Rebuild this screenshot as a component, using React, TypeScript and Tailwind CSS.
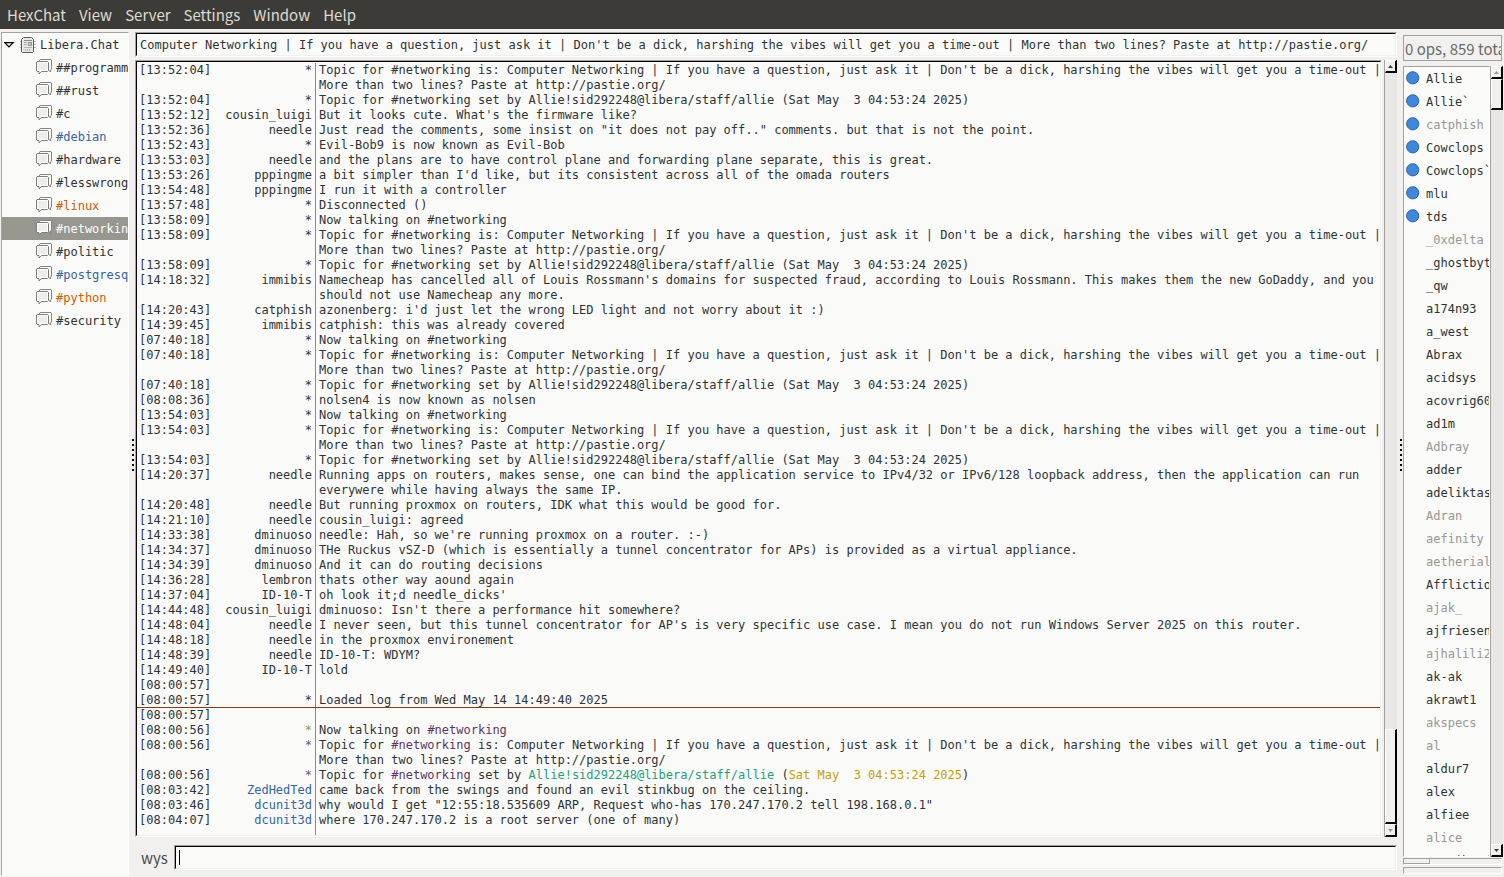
import type { ReactNode } from "react";
import clsx from "clsx";

interface Channel {
  name: string;
  tone?: "message" | "highlight";
  selected?: boolean;
}

interface User {
  name: string;
  voiced?: boolean;
  away?: boolean;
}

interface Line {
  time: string;
  nick?: string;
  nickClass?: string;
  text?: ReactNode;
  marker?: boolean;
}

const TOPIC =
  "Computer Networking | If you have a question, just ask it | Don't be a dick, harshing the vibes will get you a time-out | More than two lines? Paste at http://pastie.org/";
const TOPIC_IS = `Topic for #networking is: ${TOPIC}`;
const TOPIC_SET =
  "Topic for #networking set by Allie!sid292248@libera/staff/allie (Sat May  3 04:53:24 2025)";

const menus = ["HexChat", "View", "Server", "Settings", "Window", "Help"];

const channels: Channel[] = [
  { name: "##programming" },
  { name: "##rust" },
  { name: "#c" },
  { name: "#debian", tone: "message" },
  { name: "#hardware" },
  { name: "#lesswrong" },
  { name: "#linux", tone: "highlight" },
  { name: "#networking", selected: true },
  { name: "#politic" },
  { name: "#postgresql", tone: "message" },
  { name: "#python", tone: "highlight" },
  { name: "#security" },
];

const users: User[] = [
  { name: "Allie", voiced: true },
  { name: "Allie`", voiced: true },
  { name: "catphish", voiced: true, away: true },
  { name: "Cowclops", voiced: true },
  { name: "Cowclops`", voiced: true },
  { name: "mlu", voiced: true },
  { name: "tds", voiced: true },
  { name: "_0xdelta", away: true },
  { name: "_ghostbyt" },
  { name: "_qw" },
  { name: "a174n93" },
  { name: "a_west" },
  { name: "Abrax" },
  { name: "acidsys" },
  { name: "acovrig60" },
  { name: "ad1m" },
  { name: "Adbray", away: true },
  { name: "adder" },
  { name: "adeliktas" },
  { name: "Adran", away: true },
  { name: "aefinity", away: true },
  { name: "aetherial", away: true },
  { name: "Afflictio" },
  { name: "ajak_", away: true },
  { name: "ajfriesen" },
  { name: "ajhalili2", away: true },
  { name: "ak-ak" },
  { name: "akrawt1" },
  { name: "akspecs", away: true },
  { name: "al", away: true },
  { name: "aldur7" },
  { name: "alex" },
  { name: "alfiee" },
  { name: "alice", away: true },
  { name: "amoribund" },
];

const lines: Line[] = [
  { time: "13:52:04", nick: "*", text: TOPIC_IS },
  { time: "13:52:04", nick: "*", text: TOPIC_SET },
  { time: "13:52:12", nick: "cousin_luigi", text: "But it looks cute. What's the firmware like?" },
  { time: "13:52:36", nick: "needle", text: 'Just read the comments, some insist on "it does not pay off.." comments. but that is not the point.' },
  { time: "13:52:43", nick: "*", text: "Evil-Bob9 is now known as Evil-Bob" },
  { time: "13:53:03", nick: "needle", text: "and the plans are to have control plane and forwarding plane separate, this is great." },
  { time: "13:53:26", nick: "pppingme", text: "a bit simpler than I'd like, but its consistent across all of the omada routers" },
  { time: "13:54:48", nick: "pppingme", text: "I run it with a controller" },
  { time: "13:57:48", nick: "*", text: "Disconnected ()" },
  { time: "13:58:09", nick: "*", text: "Now talking on #networking" },
  { time: "13:58:09", nick: "*", text: TOPIC_IS },
  { time: "13:58:09", nick: "*", text: TOPIC_SET },
  { time: "14:18:32", nick: "immibis", text: "Namecheap has cancelled all of Louis Rossmann's domains for suspected fraud, according to Louis Rossmann. This makes them the new GoDaddy, and you should not use Namecheap any more." },
  { time: "14:20:43", nick: "catphish", text: "azonenberg: i'd just let the wrong LED light and not worry about it :)" },
  { time: "14:39:45", nick: "immibis", text: "catphish: this was already covered" },
  { time: "07:40:18", nick: "*", text: "Now talking on #networking" },
  { time: "07:40:18", nick: "*", text: TOPIC_IS },
  { time: "07:40:18", nick: "*", text: TOPIC_SET },
  { time: "08:08:36", nick: "*", text: "nolsen4 is now known as nolsen" },
  { time: "13:54:03", nick: "*", text: "Now talking on #networking" },
  { time: "13:54:03", nick: "*", text: TOPIC_IS },
  { time: "13:54:03", nick: "*", text: TOPIC_SET },
  { time: "14:20:37", nick: "needle", text: "Running apps on routers, makes sense, one can bind the application service to IPv4/32 or IPv6/128 loopback address, then the application can run everywere while having always the same IP." },
  { time: "14:20:48", nick: "needle", text: "But running proxmox on routers, IDK what this would be good for." },
  { time: "14:21:10", nick: "needle", text: "cousin_luigi: agreed" },
  { time: "14:33:38", nick: "dminuoso", text: "needle: Hah, so we're running proxmox on a router. :-)" },
  { time: "14:34:37", nick: "dminuoso", text: "THe Ruckus vSZ-D (which is essentially a tunnel concentrator for APs) is provided as a virtual appliance." },
  { time: "14:34:39", nick: "dminuoso", text: "And it can do routing decisions" },
  { time: "14:36:28", nick: "lembron", text: "thats other way aound again" },
  { time: "14:37:04", nick: "ID-10-T", text: "oh look it;d needle_dicks'" },
  { time: "14:44:48", nick: "cousin_luigi", text: "dminuoso: Isn't there a performance hit somewhere?" },
  { time: "14:48:04", nick: "needle", text: "I never seen, but this tunnel concentrator for AP's is very specific use case. I mean you do not run Windows Server 2025 on this router." },
  { time: "14:48:18", nick: "needle", text: "in the proxmox environement" },
  { time: "14:48:39", nick: "needle", text: "ID-10-T: WDYM?" },
  { time: "14:49:40", nick: "ID-10-T", text: "lold" },
  { time: "08:00:57" },
  { time: "08:00:57", nick: "*", text: "Loaded log from Wed May 14 14:49:40 2025" },
  { time: "08:00:57", marker: true },
  {
    time: "08:00:56",
    nick: "*",
    nickClass: "text-[#7da81e]",
    text: (
      <>
        Now talking on <span className="text-[#5c3566]">#networking</span>
      </>
    ),
  },
  {
    time: "08:00:56",
    nick: "*",
    nickClass: "text-[#75507b]",
    text: (
      <>
        Topic for <span className="text-[#5c3566]">#networking</span> is: {TOPIC}
      </>
    ),
  },
  {
    time: "08:00:56",
    nick: "*",
    nickClass: "text-[#75507b]",
    text: (
      <>
        Topic for <span className="text-[#5c3566]">#networking</span> set by{" "}
        <span className="text-[#1aa17a]">Allie!sid292248@libera/staff/allie</span> (
        <span className="text-[#c4a000]">Sat May{"  "}3 04:53:24 2025</span>)
      </>
    ),
  },
  { time: "08:03:42", nick: "ZedHedTed", nickClass: "text-[#3465a4]", text: "came back from the swings and found an evil stinkbug on the ceiling." },
  { time: "08:03:46", nick: "dcunit3d", nickClass: "text-[#3465a4]", text: 'why would I get "12:55:18.535609 ARP, Request who-has 170.247.170.2 tell 198.168.0.1"' },
  { time: "08:04:07", nick: "dcunit3d", nickClass: "text-[#3465a4]", text: "where 170.247.170.2 is a root server (one of many)" },
];

function ServerIcon() {
  return (
    <svg width="16" height="16" viewBox="0 0 16 16" className="shrink-0" aria-hidden="true">
      <path d="M0 4.5h16M0 7.5h16M0 10.5h16" stroke="#b4b4b2" />
      <path d="M3.5 0.5h8l2 2v12l-1 1h-10l-1-1v-12z" fill="#e8e8e6" stroke="#5c5c59" />
      <path d="M4 3.5h8" stroke="#8b8b89" />
      <path d="M4 5.5h3M4 7.5h3" stroke="#a3a3a1" />
      <rect x="8.5" y="5.5" width="3" height="3" fill="#c4c4c2" stroke="#979795" />
      <path d="M4 10.5h8" stroke="#b4b4b2" />
      <path d="M5.5 12v2M7.5 12v2M9.5 12v2" stroke="#b4b4b2" />
    </svg>
  );
}

function ChannelIcon() {
  return (
    <svg width="16" height="17" viewBox="0 0 16 17" className="shrink-0" aria-hidden="true">
      <path d="M4 0.5h11l0.500 0.500v9l-1 1v2l-2-2h-9v-10z" fill="#fafaf8" stroke="#858583" />
      <path d="M1 2.500h10.500l1 1v8l-1 1h-6l-2.500 2.500v-2.500h-2l-0.500-0.500v-9z" fill="#ffffff" stroke="#7c7c7a" />
      <path d="M2 4h9v7h-9z" fill="#ededeb" />
    </svg>
  );
}

function VoiceIcon() {
  return (
    <svg width="14" height="15" viewBox="0 0 14 15" className="shrink-0" aria-hidden="true">
      <circle cx="6.700" cy="6.800" r="6.100" fill="#3f87dc" stroke="#2a61ae" />
    </svg>
  );
}

function Scrollbar({ thumbClass, atTop }: { thumbClass: string; atTop?: boolean }) {
  const button =
    "flex h-[13px] w-full shrink-0 items-center justify-center border-t border-l border-r-2 border-b-2 border-t-white border-l-white border-r-black border-b-black bg-[#f1f0ee]";
  return (
    <div className="flex w-[13px] shrink-0 flex-col border-l border-[#a5a19e] bg-[#e8e7e5]">
      <button type="button" aria-label="Scroll up" className={button}>
        <svg width="5" height="3" viewBox="0 0 5 3">
          <path d="M2.500 0L5 3H0z" fill={atTop ? "#9c9a96" : "#3c3b37"} />
        </svg>
      </button>
      <div className="flex grow flex-col">
        <div
          className={clsx(
            "w-full border-t border-l border-r-2 border-b-2 border-t-white border-l-white border-r-black border-b-black bg-[#f1f0ee]",
            thumbClass,
          )}
        />
      </div>
      <button type="button" aria-label="Scroll down" className={button}>
        <svg width="5" height="3" viewBox="0 0 5 3">
          <path d="M0 0h5L2.500 3z" fill={atTop ? "#3c3b37" : "#9c9a96"} />
        </svg>
      </button>
    </div>
  );
}

function Grip() {
  return (
    <div className="flex w-[6px] shrink-0 flex-col items-end justify-center gap-[3px] pt-[2px] pr-px">
      {Array.from({ length: 7 }, (_, i) => (
        <span key={i} className="size-[2px] bg-black" />
      ))}
    </div>
  );
}

function ChannelTree() {
  return (
    <nav className="w-32 shrink-0 overflow-hidden border-t border-r border-b border-l border-t-[#a5a19e] border-r-white border-b-white border-l-[#a5a19e] bg-[#fafaf8] whitespace-nowrap">
      <div className="flex h-[23px] items-center gap-1 pl-[2px]">
        <svg width="12" height="6" viewBox="0 0 12 6" className="shrink-0">
          <path d="M0.800 0.600h8.400L5 5z" fill="none" stroke="#000" strokeWidth="1.200" />
        </svg>
        <ServerIcon />
        Libera.Chat
      </div>
      {channels.map((channel) => (
        <a
          key={channel.name}
          href="#"
          className={clsx(
            "flex h-[23px] items-center gap-1 pl-[34px]",
            channel.selected && "bg-[#98978f] text-white",
            channel.tone === "message" && "text-[#3465a4]",
            channel.tone === "highlight" && "text-[#ce5c00]",
          )}
        >
          <ChannelIcon />
          {channel.name}
        </a>
      ))}
    </nav>
  );
}

function ChatLine({ line }: { line: Line }) {
  return (
    <div className={clsx("flex", line.marker && "-mt-px border-t border-[#8f3902]")}>
      <span className="w-[76px] shrink-0 pl-[2px]">[{line.time}]</span>
      <span className={clsx("w-[103px] shrink-0 border-r border-[#8a8892] pr-[3px] text-right", line.nickClass)}>
        {line.nick}
      </span>
      {/* trailing space may run under the frame so a final "|" stays on its line */}
      <span className="-mr-1 min-w-0 grow pl-[3px] whitespace-pre-wrap">{line.text}</span>
    </div>
  );
}

function ChatLog() {
  return (
    <div className="mt-[3px] flex min-h-0 grow">
      <div className="min-w-0 grow border border-t-[#a5a19e] border-r-white border-b-white border-l-[#a5a19e]">
        <div className="flex h-full flex-col overflow-hidden border border-t-black border-r-[#f1f0ee] border-b-[#f1f0ee] border-l-black bg-[#fafaf8] pt-px leading-[15px]">
          {lines.map((line, i) => (
            <ChatLine key={i} line={line} />
          ))}
          <div className="grow pl-[178px]">
            <div className="h-full border-l border-[#8a8892]" />
          </div>
        </div>
      </div>
      <div className="flex pl-[2px]">
        <Scrollbar thumbClass="mt-auto h-[95px]" />
      </div>
    </div>
  );
}

function UserList() {
  return (
    <aside className="flex w-[100px] shrink-0 flex-col pt-[3px] pb-[2px]">
      <div className="mr-[1px] h-[26px] shrink-0 overflow-hidden border border-[#a5a19e] pl-[1px] font-['Noto_Sans_CJK_JP',sans-serif] text-[15px] leading-[26px] whitespace-nowrap text-[#6b6a66]">
        0 ops, 859 total
      </div>
      <div className="mt-[5px] flex min-h-0 grow">
        <ul className="min-w-0 grow overflow-hidden border border-t-[#a5a19e] border-r-white border-b-white border-l-[#a5a19e] bg-[#fafaf8] whitespace-nowrap">
          {users.map((user) => (
            <li key={user.name} className={clsx("flex h-[23px] items-center pl-[2px]", user.away && "text-[#999893]")}>
              <span className="w-5 shrink-0">{user.voiced && <VoiceIcon />}</span>
              {user.name}
            </li>
          ))}
        </ul>
        <Scrollbar thumbClass="h-[31px]" atTop />
      </div>
      <div className="mt-[1px] mr-[1px] h-[7px] shrink-0 border border-t-[#a5a19e] border-r-white border-b-white border-l-[#a5a19e]">
        <div className="h-full w-[26px] border-r border-b border-[#a5a19e] bg-[#f1f0ee]" />
      </div>
      <div className="mt-[2px] mr-[1px] h-[7px] shrink-0 border border-t-[#a5a19e] border-r-white border-b-white border-l-[#a5a19e]" />
    </aside>
  );
}

export default function App() {
  return (
    <div className="flex h-screen flex-col overflow-hidden bg-[#f1f0ee] font-['DejaVu_Sans_Mono',monospace] text-[12px] text-[#2e3436]">
      <header className="flex h-[29px] shrink-0 items-center gap-[13px] bg-[#3c3b37] px-[7px] pt-[2px] font-['Noto_Sans_CJK_JP',sans-serif] text-[15px] text-[#dfdbd2]">
        {menus.map((menu) => (
          <button key={menu} type="button">
            {menu}
          </button>
        ))}
      </header>

      <div className="flex min-h-0 grow pt-[3px] pr-[1px] pb-[1px] pl-[1px]">
        <ChannelTree />
        <Grip />

        <main className="flex min-w-0 grow flex-col pb-[6px]">
          <div className="h-[25px] shrink-0 border border-t-[#a5a19e] border-r-white border-b-white border-l-[#a5a19e]">
            <input
              aria-label="Topic"
              defaultValue={TOPIC}
              className="h-full w-full border border-t-black border-r-[#f1f0ee] border-b-[#f1f0ee] border-l-black bg-[#fafaf8] pl-[3px] outline-none"
            />
          </div>

          <ChatLog />

          <div className="mt-2 flex h-[25px] shrink-0 items-center">
            <label
              htmlFor="message"
              className="w-[39px] shrink-0 pt-[2px] pl-[6px] font-['Noto_Sans_CJK_JP',sans-serif] text-[15px] text-[#4c4c4c]"
            >
              wys
            </label>
            <div className="h-full grow border border-t-[#a5a19e] border-r-white border-b-white border-l-[#a5a19e]">
              <div className="flex h-full items-center border border-t-black border-r-[#f1f0ee] border-b-[#f1f0ee] border-l-black bg-[#fafaf8] pl-[3px]">
                <span className="h-[15px] w-px bg-black" />
                <input id="message" className="min-w-0 grow outline-none" />
              </div>
            </div>
          </div>
        </main>

        <Grip />
        <UserList />
      </div>
    </div>
  );
}
